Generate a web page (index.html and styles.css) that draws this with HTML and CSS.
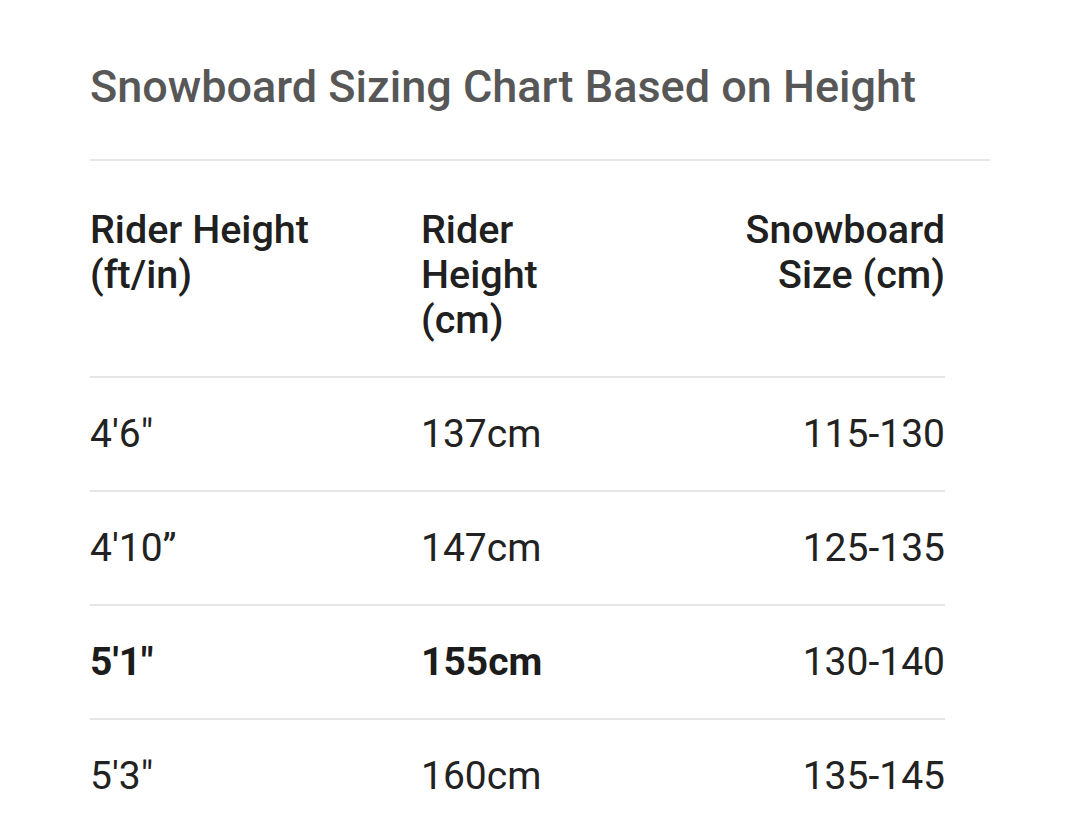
FILE: index.html
```html
<!DOCTYPE html>
<html>
<head>
<meta charset="utf-8">
<link rel="stylesheet" href="styles.css">
</head>
<body>
<div class="page">
  <h1 class="title">Snowboard Sizing Chart Based on Height</h1>
  <table class="chart">
    <colgroup>
      <col class="c1"><col class="c2"><col class="c3">
    </colgroup>
    <thead>
      <tr>
        <th class="col1">Rider Height (ft/in)</th>
        <th class="col2">Rider Height (cm)</th>
        <th class="col3">Snowboard Size (cm)</th>
      </tr>
    </thead>
    <tbody>
      <tr><td>4'6"</td><td>137cm</td><td class="col3">115-130</td></tr>
      <tr><td>4'10”</td><td>147cm</td><td class="col3">125-135</td></tr>
      <tr><td class="strong">5'1"</td><td class="strong">155cm</td><td class="col3">130-140</td></tr>
      <tr><td>5'3"</td><td>160cm</td><td class="col3">135-145</td></tr>
    </tbody>
  </table>
</div>
</body>
</html>
```

FILE: styles.css
```css
html, body {
  margin: 0;
  padding: 0;
  background: #ffffff;
}
body {
  font-family: Roboto, "Liberation Sans", Arial, sans-serif;
  color: #212121;
}
.page {
  padding: 62px 0 0 90px;
}
.title {
  width: 900px;
  margin: 0;
  font-size: 45px;
  line-height: 50px;
  font-weight: 500;
  color: #575757;
  padding-bottom: 47px;
  border-bottom: 2px solid #e6e6e6;
}
.chart {
  width: 855px;
  table-layout: fixed;
  border-collapse: collapse;
  font-size: 39px;
  line-height: 45px;
}
.c1 { width: 331px; }
.c2 { width: 270px; }
.c3 { width: 254px; }
.chart th {
  font-weight: 500;
  font-size: 39.5px;
  text-align: left;
  vertical-align: top;
  padding: 46px 0 34px 0;
  color: #202020;
}
.chart th.col1 {
  padding-right: 60px;
}
.chart th.col2 {
  padding-right: 100px;
}
.chart td {
  font-weight: 400;
  padding: 34px 0 33px 0;
  border-top: 2px solid #e6e6e6;
  color: #222222;
}
.chart .col3 {
  text-align: right;
}
.chart td.strong {
  font-weight: 700;
  color: #1c1c1c;
}
```
